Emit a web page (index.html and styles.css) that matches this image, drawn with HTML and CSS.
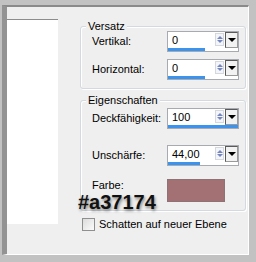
FILE: index.html
```html
<!DOCTYPE html>
<html lang="de">
<head>
    <meta charset="UTF-8">
    <title>Schlagschatten</title>
    <link rel="stylesheet" href="styles.css">
</head>
<body>
    <div class="window">
        <div class="preview"></div>

        <div class="settings">
            <!-- Versatz -->
            <div class="group">
                <div class="group-title">Versatz</div>
                <div class="row">
                    <span class="label">Vertikal:</span>
                    <div class="spin">
                        <div class="spin-top">
                            <span class="spin-value">0</span>
                            <span class="arrows"><i class="up"></i><i class="down"></i></span>
                            <span class="drop"><i></i></span>
                        </div>
                        <div class="spin-bar"><div class="spin-fill" style="width: 53%;"></div></div>
                    </div>
                </div>
                <div class="row row-next">
                    <span class="label">Horizontal:</span>
                    <div class="spin">
                        <div class="spin-top">
                            <span class="spin-value">0</span>
                            <span class="arrows"><i class="up"></i><i class="down"></i></span>
                            <span class="drop"><i></i></span>
                        </div>
                        <div class="spin-bar"><div class="spin-fill" style="width: 53%;"></div></div>
                    </div>
                </div>
            </div>

            <!-- Eigenschaften -->
            <div class="group group-props">
                <div class="group-title">Eigenschaften</div>
                <div class="row">
                    <span class="label">Deckfähigkeit:</span>
                    <div class="spin">
                        <div class="spin-top">
                            <span class="spin-value">100</span>
                            <span class="arrows"><i class="up"></i><i class="down"></i></span>
                            <span class="drop"><i></i></span>
                        </div>
                        <div class="spin-bar"><div class="spin-fill" style="width: 100%;"></div></div>
                    </div>
                </div>
                <div class="row row-blur">
                    <span class="label">Unschärfe:</span>
                    <div class="spin">
                        <div class="spin-top">
                            <span class="spin-value">44,00</span>
                            <span class="arrows"><i class="up"></i><i class="down"></i></span>
                            <span class="drop"><i></i></span>
                        </div>
                        <div class="spin-bar"><div class="spin-fill" style="width: 46%;"></div></div>
                    </div>
                </div>
                <div class="row row-color">
                    <span class="label">Farbe:</span>
                    <div class="swatch"></div>
                </div>
            </div>

            <label class="check">
                <span class="check-box"></span>
                Schatten auf neuer Ebene
            </label>
        </div>

        <div class="hex-note">#a37174</div>
    </div>
</body>
</html>
```

FILE: styles.css
```css
body {
    margin: 0;
    background: #c2c2c2;
    font-family: "Liberation Sans", Arial, sans-serif;
    font-size: 11px;
    color: #000;
}

.window {
    position: relative;
    display: flex;
    width: 241px;
    height: 247px;
    margin: 5px 0 0 2px;
    background: #efefef;
    border-top: 2px solid #8a8a8a;
    border-left: 5px solid #939393;
    border-right: 1px solid #fff;
    border-bottom: 1px solid #fff;
}

.preview {
    width: 51px;
    height: 204px;
    margin-top: 12px;
    margin-right: 22px;
    background: #fff;
    border-top: 1px solid #8c8c8c;
}

.settings {
    width: 166px;
    padding-top: 19px;
}

/* group boxes */
.group {
    border: 1px solid #d3d9de;
    border-radius: 3px;
    box-shadow: inset 1px 1px 0 #fff, 1px 1px 0 #fff;
    padding-bottom: 8px;
}

.group-props {
    margin-top: 11px;
}

.group-title {
    width: max-content;
    margin: -7px 0 -2px 5px;
    padding: 0 2px;
    line-height: 13px;
    background: #efefef;
}

.group-props .group-title {
    margin-bottom: 1px;
}

.row {
    display: flex;
    align-items: center;
    justify-content: space-between;
    padding: 0 6px 0 11px;
}

.label {
    line-height: 13px;
}

.row-next {
    margin-top: 7px;
}

.row-blur {
    margin-top: 16px;
}

.row-color {
    align-items: flex-start;
    margin-top: 13px;
}

.row-color .label {
    line-height: 12px;
}

/* spin edit with slider bar */
.spin {
    box-sizing: border-box;
    width: 72px;
    height: 21px;
    background: #fff;
    border: 1px solid #a7abb0;
}

.spin-top {
    display: flex;
    height: 16px;
}

.spin-value {
    flex: 1;
    padding-left: 4px;
    line-height: 16px;
}

.arrows {
    box-sizing: border-box;
    display: flex;
    flex-direction: column;
    align-items: center;
    justify-content: space-between;
    width: 9px;
    height: 13px;
    margin: 1px 1px 0 0;
    padding: 2px 0;
    border: 1px solid #d4d8de;
    background: #f4f5f8;
}

.arrows i {
    width: 0;
    height: 0;
    border-left: 3px solid transparent;
    border-right: 3px solid transparent;
}

.arrows .up {
    border-bottom: 3px solid #7486bd;
}

.arrows .down {
    border-top: 3px solid #7486bd;
}

.drop {
    box-sizing: border-box;
    display: flex;
    align-items: center;
    justify-content: center;
    width: 13px;
    height: 16px;
    border: 1px solid #5a5a5a;
    border-right-color: #9a9a9a;
    border-bottom-color: #9a9a9a;
    background: #f2f2f2;
}

.drop i {
    width: 0;
    height: 0;
    border-left: 4px solid transparent;
    border-right: 4px solid transparent;
    border-top: 4px solid #000;
}

.spin-bar {
    height: 3px;
}

.spin-fill {
    height: 100%;
    background: #3c93ee;
}

.swatch {
    box-sizing: border-box;
    width: 58px;
    height: 23px;
    margin-right: 14px;
    background: #a37174;
    border: 1px solid #8e7376;
}

/* checkbox */
.check {
    display: flex;
    align-items: center;
    gap: 4px;
    margin: 7px 0 0 2px;
    line-height: 13px;
}

.check-box {
    box-sizing: border-box;
    width: 13px;
    height: 13px;
    border: 1px solid #8e8f8f;
    background: linear-gradient(135deg, #dcdcdc, #fbfbfb);
}

/* colour annotation laid over the dialog */
.hex-note {
    position: absolute;
    left: 71px;
    top: 185px;
    font-size: 20px;
    font-weight: bold;
    line-height: 20px;
    color: #111;
    text-shadow: 1px 2px 3px rgba(0, 0, 0, 0.45);
}
```
